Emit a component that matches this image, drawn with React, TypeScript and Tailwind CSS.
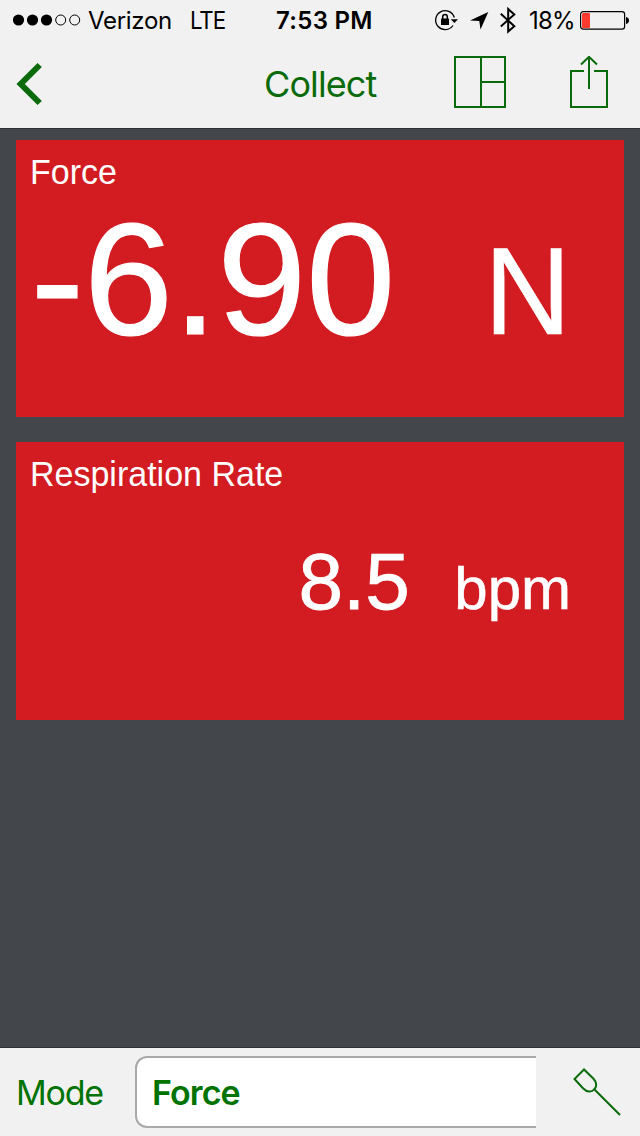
import React from 'react';

interface Reading {
  label: string;
  value: string;
  unit: string;
  cardClass: string;
  rowClass: string;
  valueClass: string;
  unitClass: string;
}

const readings: Reading[] = [
  {
    label: 'Force',
    value: '-6.90',
    unit: 'N',
    cardClass: 'h-[277px]',
    rowClass: 'mt-[27px] gap-[89px]',
    valueClass: 'text-[160px] [-webkit-text-stroke:1.2px_white]',
    unitClass: 'text-[120px] origin-[0_98%] scale-y-[1.03] [-webkit-text-stroke:0.6px_white]',
  },
  {
    label: 'Respiration Rate',
    value: '8.5',
    unit: 'bpm',
    cardClass: 'h-[278px]',
    rowClass: 'mt-[58px] gap-[44.5px]',
    valueClass: 'text-[80px] [-webkit-text-stroke:0.8px_white]',
    unitClass: 'text-[60px] [-webkit-text-stroke:0.6px_white]',
  },
];

function SignalDots() {
  return (
    <svg width="68" height="12" viewBox="0 0 68 12">
      <circle cx="5.5" cy="6" r="5.6" />
      <circle cx="19.5" cy="6" r="5.6" />
      <circle cx="33.5" cy="6" r="5.6" />
      <circle cx="47.7" cy="6" r="5" fill="none" stroke="#000" />
      <circle cx="61.7" cy="6" r="5" fill="none" stroke="#000" />
    </svg>
  );
}

// rotation lock, location, bluetooth
function StatusIcons() {
  return (
    <svg width="84" height="28" viewBox="434 6 84 28">
      <path d="M454.3 17.5A9.5 9.5 0 1 0 453 25.5" fill="none" stroke="#000" strokeWidth="1.3" />
      <path d="M450.8 19.3h7.2l-3.6 3.6z" />
      <rect x="441" y="18.6" width="8" height="6.4" rx="0.6" />
      <path d="M442.7 19v-2.2a2.3 2.3 0 0 1 4.6 0V19" fill="none" stroke="#000" strokeWidth="1.5" />
      <path d="M488.3 12L480.5 29.5L479.3 20.9L470 20.5z" />
      <path d="M500.8 13.8L514.3 26.2L508.200 31.500V9L514.3 14.4L500.8 26.4" fill="none" stroke="#000" strokeWidth="2" />
    </svg>
  );
}

function Battery() {
  return (
    <svg width="50" height="20" viewBox="0 0 50 20">
      <rect x="0.6" y="1.6" width="44" height="17.6" rx="2.6" fill="none" stroke="#000" strokeWidth="1.2" />
      <rect x="2" y="3" width="8" height="15" rx="0.8" fill="#ff3b30" />
      <path d="M46 7c4 .4 4 6.600 0 7z" />
    </svg>
  );
}

function StatusBar() {
  return (
    <div className="flex h-10 items-center text-2xl leading-10 text-black">
      <div className="ml-[13px] flex w-[263px] items-center">
        <SignalDots />
        <span className="ml-[7px] w-[102px] pt-0.5 tracking-[-0.3px]">Verizon</span>
        <span className="origin-left scale-x-[0.93] pt-0.5 tracking-[-1.2px]">LTE</span>
      </div>
      <span className="w-[158px] pt-0.5 font-semibold tracking-[0.3px]">7:53 PM</span>
      <StatusIcons />
      <span className="ml-[11px] w-[51px] pt-0.5 whitespace-nowrap tracking-[-0.8px]">18%</span>
      <Battery />
    </div>
  );
}

function NavBar() {
  return (
    <div className="flex h-[88px] items-center text-[#0b6b0b]">
      <button className="ml-4 w-[248px]" aria-label="Back">
        <svg width="28" height="44" viewBox="0 0 28 44" fill="none" stroke="currentColor" strokeWidth="6">
          <path d="M23.700 3L4.700 22L23.700 41" />
        </svg>
      </button>
      <h1 className="w-[190px] text-4xl leading-[88px] tracking-[-0.9px]">Collect</h1>
      <button aria-label="Layout">
        <svg width="52" height="56" viewBox="0 0 52 56" fill="none" stroke="currentColor" strokeWidth="2">
          <path d="M1 1H51V51H1zM27 1V51M27 26H51" />
        </svg>
      </button>
      <button className="ml-16" aria-label="Share">
        <svg width="38" height="56" viewBox="0 0 38 56" fill="none" stroke="currentColor" strokeWidth="2">
          <path d="M14 15H1V51H37V15H24M19 33V1M11 8.500L19 0.800L27 8.500" />
        </svg>
      </button>
    </div>
  );
}

function ReadingCard({ reading }: { reading: Reading }) {
  return (
    <section className={`bg-[#d31b22] pt-3 pr-[53px] font-['Liberation_Sans',sans-serif] text-white ${reading.cardClass}`}>
      <h2 className="ml-[14px] h-10 origin-[0_80%] scale-y-[1.04] text-[34px] leading-10">{reading.label}</h2>
      <div className={`flex items-baseline justify-end ${reading.rowClass}`}>
        <span className={`leading-[0.75] ${reading.valueClass}`}>{reading.value}</span>
        <span className={`leading-[0.75] ${reading.unitClass}`}>{reading.unit}</span>
      </div>
    </section>
  );
}

function ModeBar() {
  return (
    <footer className="flex h-[89px] items-center border-t border-[#2e3033] bg-[#f1f1f1] text-[34px] text-[#007300]">
      <span className="ml-4 w-[119px] tracking-[-1.2px]">Mode</span>
      <div className="flex h-[72px] w-[401px] items-center rounded-l-xl border-y-2 border-l-2 border-[#a9a9a9] bg-white pl-[15px] font-semibold tracking-[-0.9px]">
        Force
      </div>
      <button className="ml-9 text-[#0b6b0b]" aria-label="Sensor">
        <svg width="50" height="50" viewBox="0 0 50 50" fill="none" stroke="currentColor" strokeWidth="2">
          <path d="M12 2.500L2.500 12L11 21.200C15 25.500 20 25 22 22.500C25 20 25 15.500 21.500 11.800zM22.500 22.500L48 48" />
        </svg>
      </button>
    </footer>
  );
}

function App() {
  return (
    <div className="flex h-[1136px] w-[640px] flex-col overflow-hidden bg-[#43464b] font-[Inter,sans-serif]">
      <header className="h-[129px] border-b border-[#2e3033] bg-[#f1f1f1]">
        <StatusBar />
        <NavBar />
      </header>
      <main className="flex flex-1 flex-col gap-[25px] px-4 pt-[11px]">
        {readings.map((reading) => (
          <ReadingCard key={reading.label} reading={reading} />
        ))}
      </main>
      <ModeBar />
    </div>
  );
}

export default App;
